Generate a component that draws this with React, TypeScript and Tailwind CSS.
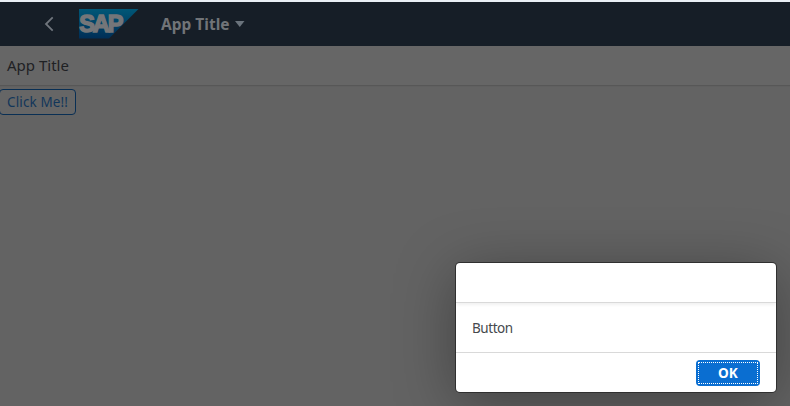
import React from "react";

function ShellBar() {
  return (
    <header className="box-border flex h-[46px] items-center border-t-2 border-[#e9eff5] bg-[#161e27] text-[#717478]">
      <svg className="ml-[44px] h-4 w-[10px] shrink-0" viewBox="0 0 10 16" fill="none" stroke="#70767d" strokeWidth="1.8">
        <path d="M8.7 1.4 2 8l6.7 6.6" />
      </svg>
      <svg className="ml-[25px] h-[30px] w-[60px] shrink-0" viewBox="0 0 60 30">
        <defs>
          <linearGradient id="logo" x1="0" y1="0" x2="0" y2="1">
            <stop offset="0" stopColor="#005777" />
            <stop offset="1" stopColor="#002e56" />
          </linearGradient>
        </defs>
        <path d="M0 0h59.5L30 29.5H0z" fill="url(#logo)" />
        <text x="0.3" y="23.2" letterSpacing="-2.1" fill="#747679" stroke="#747679" strokeWidth="1.5" fontSize="23.5" fontWeight="700" fontFamily="Liberation Sans, sans-serif">SAP</text>
      </svg>
      <span className="ml-[22px] w-[70px] whitespace-nowrap text-[15.5px] leading-5 font-bold">App Title</span>
      <svg className="ml-[4px] h-[6px] w-[10px] shrink-0" viewBox="0 0 10 6">
        <path d="M0 0h9.5L4.75 6z" fill="#6a737c" />
      </svg>
    </header>
  );
}

function MessageDialog() {
  return (
    <section className="mt-auto mr-[14px] mb-[14px] flex h-[129px] w-[320px] flex-col self-end overflow-hidden rounded-[4px] bg-white shadow-[0_0_0_1px_#303030,0_10px_60px_0_rgba(0,0,0,0.35)]">
      <div className="z-10 h-[40px] shrink-0 border-b border-[#d9d9d9] shadow-[0_2px_3px_rgba(0,0,0,0.06)]" />
      <div className="flex h-[49px] shrink-0 items-center px-4 pt-[1px] text-[13.5px] tracking-[-0.45px] text-[#45494d]">Button</div>
      <div className="flex h-[40px] items-center justify-end border-t border-[#d9d9d9] pr-4 pt-[1px]">
        <button className="flex h-[26px] w-[64px] rounded-[4px] bg-[#0a6ed1] p-[2px] text-[13.6px] font-bold text-white">
          <span className="flex h-full w-full items-center justify-center border border-dotted border-white">OK</span>
        </button>
      </div>
    </section>
  );
}

export default function App() {
  return (
    <div className="flex h-[406px] w-[790px] flex-col overflow-hidden bg-[#636363] font-['Noto_Sans',sans-serif]">
      <ShellBar />
      <div className="flex h-[39px] shrink-0 items-center bg-[#666666] pl-[7px] text-[15px] text-[#1f2124] shadow-[0_1px_1px_#575757]">App Title</div>
      <button className="mt-[4px] -ml-px flex h-[26px] w-[77px] shrink-0 items-center justify-center rounded-[4px] border border-[#092f54] bg-[#666666] pt-px text-[13.5px] tracking-[0.1px] text-[#12365a]">Click Me!!</button>
      <MessageDialog />
    </div>
  );
}
